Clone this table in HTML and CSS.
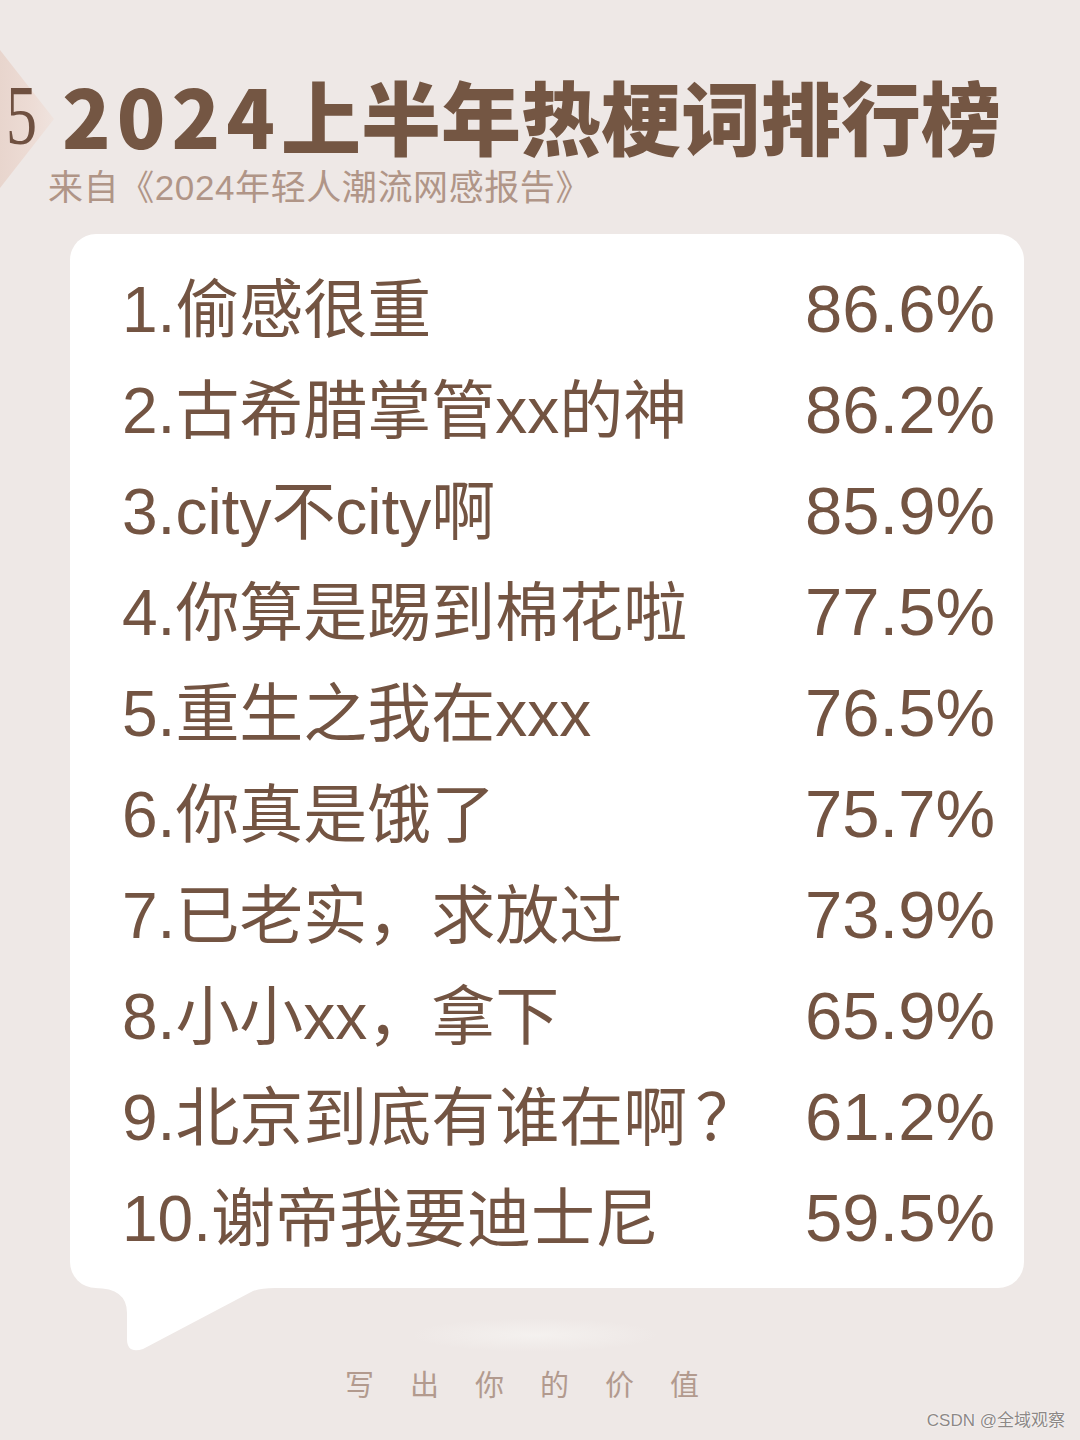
FILE: index.html
```html
<!DOCTYPE html>
<html lang="zh-CN">
<head>
<meta charset="utf-8">
<title>2024上半年热梗词排行榜</title>
<link rel="stylesheet" href="styles.css">
</head>
<body>
<div class="page">
  <div class="deco-tri"></div>
  <header class="header">
    <div class="title-row">
      <span class="index">5</span>
      <h1 class="title"><span class="year">2024</span>上半年热梗词排行榜</h1>
    </div>
    <p class="subtitle">来自《2024年轻人潮流网感报告》</p>
  </header>

  <section class="card">
    <ul class="rank">
      <li class="row"><span class="name">1.偷感很重</span><span class="pct">86.6%</span></li>
      <li class="row"><span class="name">2.古希腊掌管xx的神</span><span class="pct">86.2%</span></li>
      <li class="row"><span class="name">3.city不city啊</span><span class="pct">85.9%</span></li>
      <li class="row"><span class="name">4.你算是踢到棉花啦</span><span class="pct">77.5%</span></li>
      <li class="row"><span class="name">5.重生之我在xxx</span><span class="pct">76.5%</span></li>
      <li class="row"><span class="name">6.你真是饿了</span><span class="pct">75.7%</span></li>
      <li class="row"><span class="name">7.已老实，求放过</span><span class="pct">73.9%</span></li>
      <li class="row"><span class="name">8.小小xx，拿下</span><span class="pct">65.9%</span></li>
      <li class="row"><span class="name">9.北京到底有谁在啊<span class="qm">？</span></span><span class="pct">61.2%</span></li>
      <li class="row"><span class="name">10.谢帝我要迪士尼</span><span class="pct">59.5%</span></li>
    </ul>
    <svg class="tail" width="200" height="80" viewBox="0 0 200 80" aria-hidden="true">
      <path d="M5 0 L5 9 Q37 9 37 34 L37 60 Q37 75 53 70 L163 12 Q171 9 185 9 L185 0 Z" fill="#ffffff"/>
    </svg>
  </section>

  <div class="smudge"></div>

  <footer class="footer">
    <p class="slogan">写出你的价值</p>
  </footer>

  <div class="watermark">CSDN @全域观察</div>
</div>
</body>
</html>
```
FILE: styles.css
```css
html, body {
  margin: 0;
  padding: 0;
}

body {
  background: #eee8e6;
  font-family: "Liberation Sans", "Noto Sans CJK SC", sans-serif;
}

.page {
  position: relative;
  width: 1080px;
  height: 1440px;
  overflow: hidden;
  background: #eee8e6;
}

.deco-tri {
  position: absolute;
  left: 0;
  top: 50px;
  width: 54px;
  height: 138px;
  background: linear-gradient(90deg, #e8d5cd 0%, #eddcd5 60%, #efe3de 100%);
  clip-path: polygon(0 0, 100% 50%, 0 100%);
}

.header {
  position: relative;
  padding: 74px 0 0 6px;
}

.title-row {
  display: flex;
  align-items: center;
  gap: 20px;
  height: 80px;
}

.index {
  font-family: "Liberation Serif", "DejaVu Serif", serif;
  font-size: 84px;
  line-height: 80px;
  color: #6f5040;
  transform: scaleX(0.74);
  transform-origin: left center;
  width: 36px;
  margin-top: 4px;
}

.title {
  margin: 0;
  font-family: "Noto Sans CJK SC", sans-serif;
  font-weight: 900;
  font-size: 80px;
  line-height: 80px;
  color: #745643;
  white-space: nowrap;
}

.year {
  letter-spacing: 6px;
}

.subtitle {
  margin: 16px 0 0 42px;
  font-family: "Liberation Sans", "Noto Sans CJK SC", sans-serif;
  font-size: 35px;
  line-height: 36px;
  letter-spacing: 0.6px;
  color: #b09587;
}

.card {
  position: relative;
  margin: 28px 56px 0 70px;
  background: #ffffff;
  border-radius: 26px;
  padding: 24px 29px 20px 52px;
}

.rank {
  list-style: none;
  margin: 0;
  padding: 0;
}

.row {
  display: flex;
  justify-content: space-between;
  align-items: baseline;
  height: 101px;
  line-height: 101px;
  color: #735442;
}

.name {
  font-size: 64px;
  white-space: nowrap;
}

.qm {
  display: inline-block;
  margin-left: 8px;
}

.pct {
  font-size: 67px;
  white-space: nowrap;
}

.tail {
  position: absolute;
  left: 20px;
  top: 100%;
  margin-top: -9px;
  display: block;
}

.smudge {
  position: absolute;
  left: 410px;
  top: 1318px;
  width: 250px;
  height: 34px;
  border-radius: 50%;
  background: radial-gradient(ellipse at center, rgba(245,242,240,0.9) 0%, rgba(238,232,230,0) 70%);
}

.footer {
  position: absolute;
  left: 0;
  right: 0;
  top: 1363px;
}

.slogan {
  margin: 0;
  text-align: center;
  font-family: "Noto Sans CJK SC", sans-serif;
  font-size: 29px;
  line-height: 40px;
  letter-spacing: 36px;
  color: #b29a8e;
}

.watermark {
  position: absolute;
  right: 15px;
  bottom: 8px;
  font-family: "Liberation Sans", "Noto Sans CJK SC", sans-serif;
  font-size: 17px;
  line-height: 22px;
  color: #8d8886;
  text-shadow: 0 0 2px #ffffff, 0 0 1px #ffffff;
}
```
